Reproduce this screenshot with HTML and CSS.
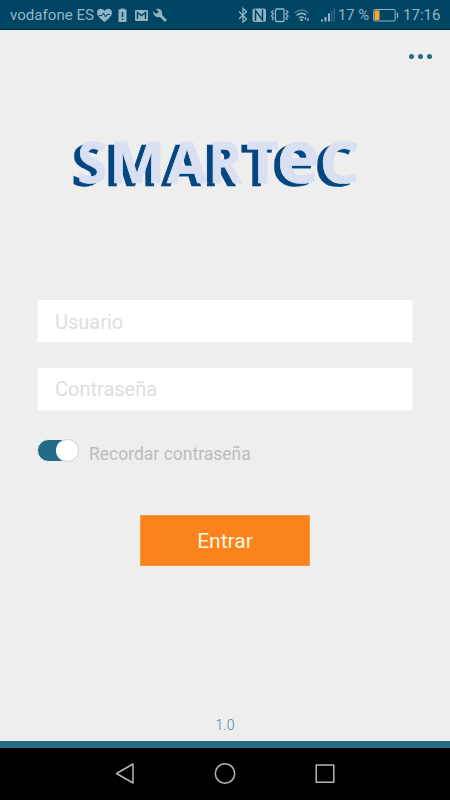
FILE: index.html
```html
<!DOCTYPE html>
<html lang="es">
<head>
<meta charset="utf-8">
<title>Smartec</title>
<link rel="stylesheet" href="styles.css">
</head>
<body>
<header class="status">
  <span class="carrier">vodafone ES</span>
  <svg class="icons-left" width="72" height="30" viewBox="0 0 72 30">
    <path fill="currentColor" d="M8.500 22C5 19 1 16 1 12.700C1 8.500 6 7.500 8.500 11C11 7.500 16 8.500 16 12.700C16 16 12 19 8.500 22Z"/>
    <path class="cut thin" d="M3 15.500H6L7.500 13L9.500 17L11 14.500H14"/>
    <path fill="currentColor" d="M22.500 9.500H24.500V8.500H28.500V9.500H30.500V22H22.500Z"/>
    <path class="cut" d="M26.500 12V17M26.500 18.500V20"/>
    <rect x="39" y="10" width="13" height="11" rx="1" fill="currentColor"/>
    <path class="cut" d="M41.500 19V12.500L45.500 15.500L49.500 12.500V19"/>
    <path fill="currentColor" d="M57 11L60 14L63 12L60 9C64 8 67 11 66 15L71 20L69 22L64 17C60 18 57 15 57 11Z"/>
  </svg>
  <svg class="icons-right" width="100" height="30" viewBox="238 0 100 30">
    <g fill="none" stroke="currentColor" stroke-width="1.300">
      <path d="M239 11.500L246.500 19L243 22V8.500L246.500 11.500L239 19"/>
      <rect x="275.500" y="9" width="8.500" height="12.500" rx="1"/>
      <path d="M273.500 10.500L271.500 12L273.500 14L271.500 16L273.500 18L272 20M286 10.500L288 12L286 14L288 16L286 18L287.500 20"/>
      <path d="M294.500 13Q301.500 7 308.500 13" opacity=".5"/>
      <path d="M296.500 15.500Q301.500 11.500 306 15M299 18Q301.500 16 304 18" stroke-width="1.600"/>
      <path d="M305.500 17V20M308 18V21"/>
    </g>
    <circle cx="301.500" cy="20" r="1.300" fill="currentColor"/>
    <rect x="252.500" y="8.500" width="13.500" height="13.500" rx="2" fill="currentColor"/>
    <path class="cut" d="M255.500 21V10.500L262.500 20V9.500"/>
    <path fill="currentColor" d="M321 19.500h2v2h-2zM324.500 17h2v4.500h-2zM328 13.500h2v8h-2z"/>
    <path fill="currentColor" opacity=".3" d="M331 11h1.500v10.500H331zM333.500 8.500h1.500v13h-1.500z"/>
  </svg>
  <span class="percent">17 %</span>
  <svg class="battery" width="26" height="30" viewBox="0 0 26 30">
    <rect x=".7" y="9.500" width="21.500" height="11.500" rx="1" fill="none" stroke="currentColor"/>
    <rect x="1.500" y="10.500" width="5" height="9.500" fill="#f6a82d"/>
    <path d="M24.500 12.500V18" stroke="currentColor" stroke-width="1.300"/>
  </svg>
  <span class="clock">17:16</span>
</header>
<main class="screen">
  <div class="menu"><i></i><i></i><i></i></div>
  <svg class="logo" width="300" height="64" viewBox="65 132 300 64" role="img" aria-label="SMARTeC">
    <defs>
      <g id="word">
        <text x="71.200" y="186.300" textLength="30.300" lengthAdjust="spacingAndGlyphs">S</text>
        <text x="103.200" y="186.300" textLength="56" lengthAdjust="spacingAndGlyphs">M</text>
        <text x="161" y="186.300" textLength="40" lengthAdjust="spacingAndGlyphs">A</text>
        <text x="202.500" y="186.300" textLength="33.500" lengthAdjust="spacingAndGlyphs">R</text>
        <text x="240.500" y="186.300" textLength="32.200" lengthAdjust="spacingAndGlyphs">T</text>
        <text class="tall-e" x="271" y="186.300" textLength="43" lengthAdjust="spacingAndGlyphs">e</text>
        <text x="313.500" y="186.300" textLength="40" lengthAdjust="spacingAndGlyphs">C</text>
      </g>
    </defs>
    <use href="#word" class="logo-shadow"/>
    <use href="#word" class="logo-face" x="6" y="-3"/>
  </svg>
  <form class="login">
    <input class="field" type="text" placeholder="Usuario">
    <input class="field" type="password" placeholder="Contraseña">
    <div class="remember"><span class="switch"><i></i></span><span>Recordar contraseña</span></div>
    <button class="enter" type="button">Entrar</button>
  </form>
  <div class="version">1.0</div>
</main>
<nav class="nav">
  <svg width="450" height="52" viewBox="0 748 450 52" fill="none" stroke="#b5b5b5" stroke-width="1.500" stroke-linejoin="round">
    <path d="M133 764V783L116.500 773.500Z"/>
    <circle cx="225" cy="773.500" r="9.700"/>
    <rect x="316.200" y="765" width="17.600" height="17.300"/>
  </svg>
</nav>
</body>
</html>
```
FILE: styles.css
```css
* { box-sizing: border-box; }
body {
  margin: 0;
  width: 450px;
  height: 800px;
  overflow: hidden;
  display: flex;
  flex-direction: column;
  background: #eee;
  font-family: Roboto, sans-serif;
}
.status {
  height: 30px;
  flex: none;
  display: flex;
  align-items: center;
  padding: 0 0 0 10px;
  background: #004563;
  border-bottom: 1px solid #002b3f;
  color: #91b5c6;
  font-size: 15.1px;
  line-height: 30px;
  white-space: nowrap;
}
.status svg, .status span { flex: none; display: block; }
.status span { padding-top: 1px; }
.carrier { width: 86px; }
.icons-right { margin-left: 70px; }
.percent { width: 34px; font-size: 14.8px; }
.battery { margin-left: 1px; }
.clock { margin-left: 4px; }
.cut { fill: none; stroke: #004563; stroke-width: 1.5; }
.thin { stroke-width: 1; }
.screen {
  flex: 1;
  display: flex;
  flex-direction: column;
  border-bottom: 7px solid #246b86;
}
.menu {
  display: flex;
  justify-content: flex-end;
  gap: 4px;
  padding: 24px 18px 0 0;
}
.menu i { width: 5px; height: 5px; border-radius: 50%; background: #216b88; }
.logo {
  display: block;
  margin: 73px 0 0 65px;
  font: 700 57px "Open Sans", sans-serif;
}
.tall-e { font-size: 73px; }
.logo-shadow { fill: #034681; stroke: #034681; stroke-width: .3; }
.logo-face { fill: #d9e0f1; stroke: #d9e0f1; stroke-width: .7; }
.login {
  display: flex;
  flex-direction: column;
  margin: 104px 37px 0;
}
.field {
  width: 376px;
  height: 43px;
  margin: 0 0 24.5px;
  padding: 1px 17px 0;
  border: 1px solid #f5f5f5;
  border-width: 0 1px 1px;
  background: #fff;
  font: 400 20px Roboto, sans-serif;
}
.field::placeholder { color: #dedede; opacity: 1; }
.remember {
  display: flex;
  align-items: center;
  height: 25px;
  margin-top: 4px;
  gap: 10px;
  color: #bcbcbc;
  font-size: 17.5px;
}
.remember > span:last-child { padding-top: 4px; }
.switch {
  display: flex;
  justify-content: flex-end;
  width: 42px;
  height: 23px;
  margin-top: -3px;
  border: 1px solid #eee;
  border-radius: 12px;
  background: #216b88;
}
.switch i {
  width: 23px;
  height: 23px;
  margin: -1px -1px 0 0;
  border: 1.5px solid #d8d8d8;
  border-left-color: #fff;
  border-radius: 50%;
  background: #fff;
}
.enter {
  align-self: center;
  width: 170px;
  height: 51px;
  margin-top: 51px;
  padding: 0;
  border: 1px solid #f79843;
  background: #fa831d;
  color: #fff5df;
  font: 400 21px Roboto, sans-serif;
}
.version {
  margin-top: auto;
  padding-bottom: 8px;
  text-align: center;
  color: #4d879f;
  font-size: 14px;
  font-weight: 300;
  line-height: 16px;
}
.nav { height: 52px; flex: none; background: #000; }
.nav svg { display: block; }
```
